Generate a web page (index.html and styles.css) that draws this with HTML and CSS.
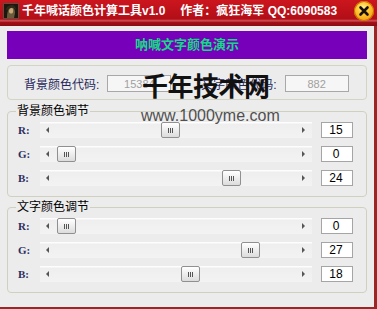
FILE: index.html
```html
<!DOCTYPE html>
<html lang="zh">
<head>
    <meta charset="UTF-8">
    <title>千年喊话颜色计算工具v1.0</title>
    <link rel="stylesheet" href="styles.css">
</head>
<body>

    <div class="window">
        <div class="titlebar">
            <svg class="app-icon" width="16" height="16" viewBox="0 0 16 16">
                <rect width="16" height="16" fill="#1c1810"/>
                <rect x="0.5" y="0.5" width="15" height="15" fill="none" stroke="#5a5040"/>
                <path d="M4 15 C4 10 5 5 8 4 C11 4 12 7 12 10 L11 15 Z" fill="#6a5a3a"/>
                <path d="M6 9 C6 6 7 5 8.5 5 C10 5 10.5 7 10 9 C9.5 11 7 11 6 9 Z" fill="#c8a878"/>
                <path d="M3 6 C4 3 7 2 9 2 C11 2 13 4 13 7 L12 6 C10 4 6 4 4 8 Z" fill="#302818"/>
            </svg>
            <span class="title">千年喊话颜色计算工具v1.0</span>
            <span class="title author">作者：疯狂海军 QQ:6090583</span>
            <span class="close-btn">
                <svg width="20" height="20" viewBox="0 0 20 20">
                    <path d="M6.5 6.5 L13.5 13.5 M13.5 6.5 L6.5 13.5" stroke="#1a1000" stroke-width="2.6" stroke-linecap="round"/>
                </svg>
            </span>
        </div>

        <div class="client">
            <div class="banner">呐喊文字颜色演示</div>

            <div class="code-box">
                <span class="code-label">背景颜色代码:</span>
                <input class="code-input" type="text" value="15384" readonly>
                <span class="code-label second">文字颜色代码:</span>
                <input class="code-input" type="text" value="882" readonly>
            </div>

            <fieldset class="group">
                <legend>背景颜色调节</legend>
                <div class="row">
                    <span class="ch">R:</span>
                    <div class="track"><i class="arr arr-left"></i><span class="thumb" style="left:121px"></span><i class="arr arr-right"></i></div>
                    <input class="val" type="text" value="15">
                </div>
                <div class="row">
                    <span class="ch">G:</span>
                    <div class="track"><i class="arr arr-left"></i><span class="thumb" style="left:17px"></span><i class="arr arr-right"></i></div>
                    <input class="val" type="text" value="0">
                </div>
                <div class="row">
                    <span class="ch">B:</span>
                    <div class="track"><i class="arr arr-left"></i><span class="thumb" style="left:182px"></span><i class="arr arr-right"></i></div>
                    <input class="val" type="text" value="24">
                </div>
            </fieldset>

            <fieldset class="group group-text">
                <legend>文字颜色调节</legend>
                <div class="row">
                    <span class="ch">R:</span>
                    <div class="track"><i class="arr arr-left"></i><span class="thumb" style="left:17px"></span><i class="arr arr-right"></i></div>
                    <input class="val" type="text" value="0">
                </div>
                <div class="row">
                    <span class="ch">G:</span>
                    <div class="track"><i class="arr arr-left"></i><span class="thumb" style="left:201px"></span><i class="arr arr-right"></i></div>
                    <input class="val" type="text" value="27">
                </div>
                <div class="row">
                    <span class="ch">B:</span>
                    <div class="track"><i class="arr arr-left"></i><span class="thumb" style="left:141px"></span><i class="arr arr-right"></i></div>
                    <input class="val" type="text" value="18">
                </div>
            </fieldset>

            <div class="watermark">千年技术网</div>
            <div class="watermark-url">www.1000yme.com</div>
        </div>
    </div>

</body>
</html>
```

FILE: styles.css
```css
body {
    margin: 0;
    padding: 0;
    background-color: #ececec;
    font-family: "Liberation Sans", "Noto Sans CJK SC", sans-serif;
    font-size: 12px;
}

.window {
    width: 377px;
    height: 309px;
    display: flex;
    flex-direction: column;
}

.titlebar {
    height: 26px;
    flex: none;
    display: flex;
    align-items: flex-start;
    background: linear-gradient(to bottom, #cc161e 0px, #b20e17 19px, #d25a60 21px, #a51018 22px, #8c0b13 26px);
}

.app-icon {
    margin: 3px 3px 0 3px;
    flex: none;
}

.title {
    color: white;
    font-weight: bold;
    font-size: 12px;
    line-height: 22px;
    white-space: nowrap;
}

.author {
    margin-left: 15px;
}

.close-btn {
    width: 20px;
    height: 20px;
    margin: 1px 3px 0 auto;
    border-radius: 50%;
    background: radial-gradient(circle at 45% 35%, #fff2a0 0%, #ffc830 35%, #f29a10 80%, #d87a00 100%);
    box-shadow: inset 0 0 0 1px #c87000;
    flex: none;
}

.client {
    position: relative;
    flex: 1;
    padding: 5px 7px 0 7px;
    border-right: 3px solid #9b2626;
    border-bottom: 2px solid #9b2626;
}

.banner {
    height: 28px;
    line-height: 28px;
    background-color: #7700bb;
    color: #12da86;
    font-size: 13px;
    font-weight: bold;
    text-align: center;
}

.code-box {
    box-sizing: border-box;
    height: 35px;
    margin-top: 6px;
    padding: 2px 0 0 16px;
    display: flex;
    align-items: center;
    border: 1px solid #d4d4c4;
    border-radius: 4px;
}

.code-label {
    color: #26265a;
    font-size: 12px;
    margin-right: 8px;
}

.code-label.second {
    margin-left: 30px;
}

.code-input {
    box-sizing: border-box;
    width: 64px;
    height: 17px;
    padding: 0;
    border: 1px solid #a8a8a8;
    background-color: #f6f6f6;
    color: #a0a0a0;
    font-family: "Liberation Sans", sans-serif;
    font-size: 11px;
    text-align: center;
}

.group {
    margin: 4px 0 0 0;
    padding: 4px 13px 10px 10px;
    min-inline-size: 0;
    border: 1px solid #d0d0bf;
    border-radius: 4px;
}

.group-text {
    margin-top: 3px;
}

.group legend {
    padding: 0 1px;
    margin-left: -2px;
    font-size: 12px;
    line-height: 14px;
    color: #000;
}

.row {
    display: flex;
    align-items: center;
    height: 16px;
}

.row + .row {
    margin-top: 8px;
}

.ch {
    width: 22px;
    flex: none;
    font-family: "Liberation Serif", serif;
    font-weight: bold;
    font-size: 11px;
    color: #2c2c60;
}

.track {
    position: relative;
    width: 272px;
    height: 16px;
    flex: none;
    display: flex;
    align-items: center;
    justify-content: space-between;
    padding: 0 7px 0 6px;
    box-sizing: border-box;
    background: linear-gradient(to bottom, #fdfdfd 0px, #fdfdfd 1px, #eeeeee 2px, #f3f3f3 100%);
}

.arr {
    width: 0;
    height: 0;
    border-top: 3px solid transparent;
    border-bottom: 3px solid transparent;
}

.arr-left {
    border-right: 3px solid #555;
}

.arr-right {
    border-left: 3px solid #555;
}

.thumb {
    position: absolute;
    top: 0;
    box-sizing: border-box;
    width: 19px;
    height: 16px;
    border: 1px solid #909090;
    border-radius: 2px;
    background:
        linear-gradient(#555, #555) 6px 5px / 1px 5px no-repeat,
        linear-gradient(#555, #555) 8px 5px / 1px 5px no-repeat,
        linear-gradient(#555, #555) 10px 5px / 1px 5px no-repeat,
        linear-gradient(to bottom, #ffffff, #dcdcdc);
}

.val {
    box-sizing: border-box;
    width: 32px;
    height: 16px;
    margin-left: 9px;
    padding: 0 2px 0 0;
    border: 1px solid #a5a5a5;
    background-color: white;
    color: #000;
    font-family: "Liberation Sans", sans-serif;
    font-size: 12px;
    text-align: center;
}

.watermark {
    position: absolute;
    top: 44px;
    left: 142px;
    font-family: "Noto Sans CJK SC", sans-serif;
    font-weight: 700;
    font-size: 26px;
    line-height: 30px;
    color: #111;
    letter-spacing: -0.5px;
}

.watermark-url {
    position: absolute;
    top: 81px;
    left: 141px;
    font-family: "Liberation Sans", sans-serif;
    font-size: 16px;
    line-height: 18px;
    color: #505050;
}
```
